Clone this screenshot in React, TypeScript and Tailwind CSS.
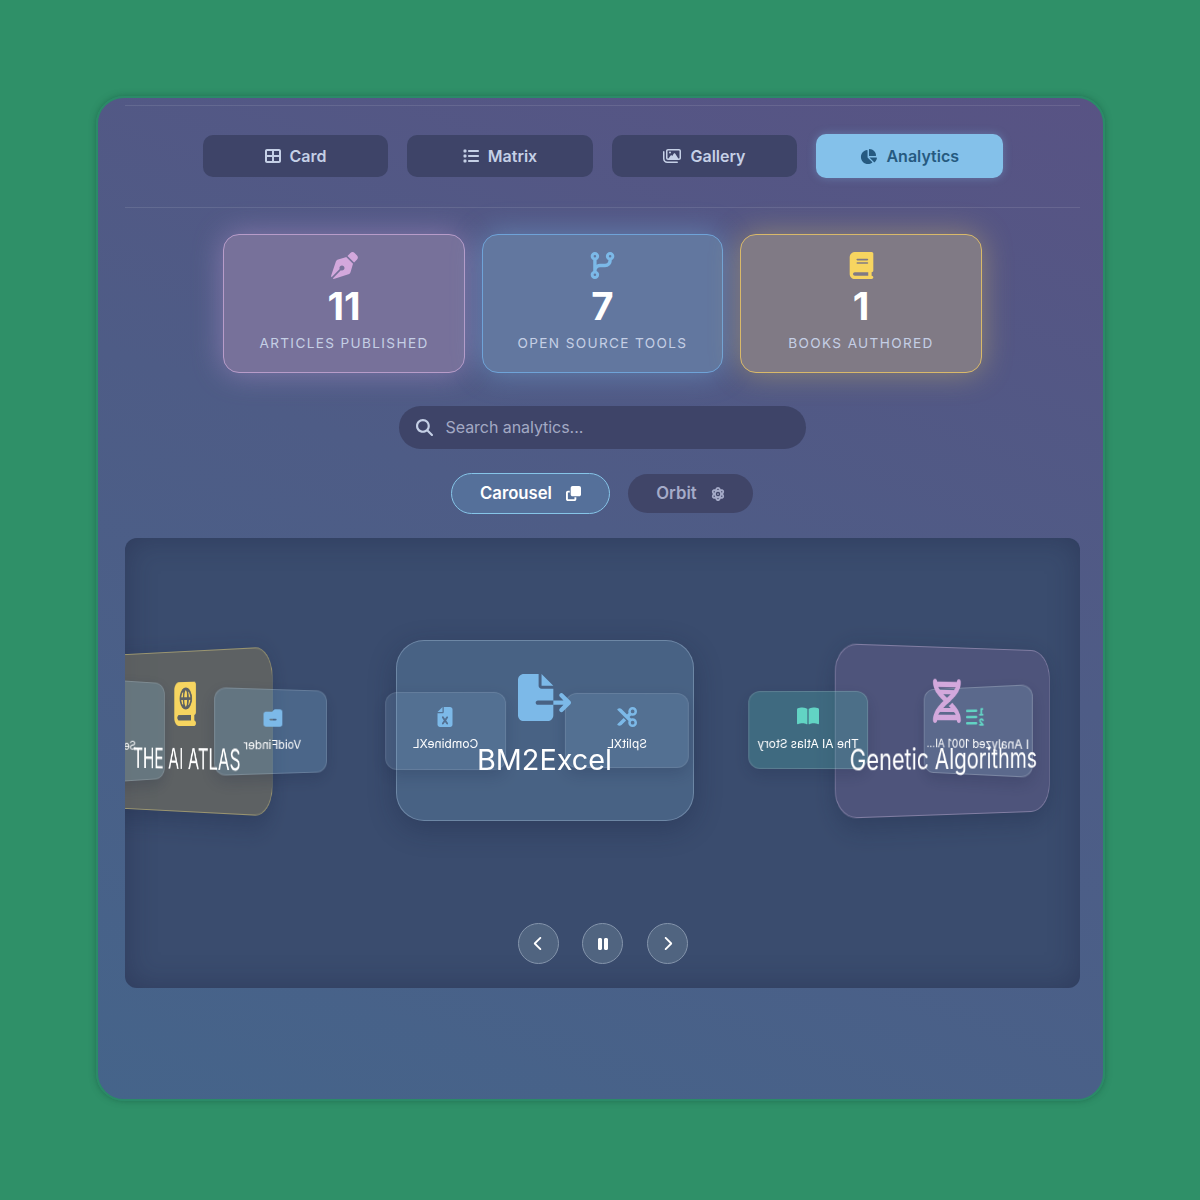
import * as React from "react";
import {
  FaAtom,
  FaBook,
  FaBookAtlas,
  FaBookOpen,
  FaChartPie,
  FaChevronLeft,
  FaChevronRight,
  FaClone,
  FaCodeBranch,
  FaDna,
  FaFileExcel,
  FaFileExport,
  FaFileImage,
  FaFolderMinus,
  FaList,
  FaListOl,
  FaMagnifyingGlass,
  FaPause,
  FaPenNib,
  FaRegImages,
  FaScissors,
  FaTableCellsLarge,
} from "react-icons/fa6";

const FONT = "font-['Inter','Liberation_Sans',sans-serif]";

// the three large cards: their glass sits under the small cards, their content over them
const ATLAS_BOX = "left-[-88px] top-[113px] h-[161px] w-[296px] [transform:perspective(2300px)_rotateY(-56deg)]";
const EXCEL_BOX = "left-[271px] top-[102px] h-[181px] w-[298px]";
const GENETIC_BOX = "left-[673px] top-[109px] h-[168px] w-[298px] [transform:perspective(2300px)_rotateY(44deg)]";

function Tab({ icon, label, active }: { icon: React.ReactNode; label: string; active?: boolean }) {
  return (
    <button
      type="button"
      className={
        active
          ? "flex h-[44px] w-[187px] items-center justify-center gap-[9px] rounded-[10px] bg-[#84c1ea] text-[16px] font-semibold text-[#265a80] shadow-[0_0_8px_rgba(132,193,234,0.35)]"
          : "flex h-[42px] w-[185.5px] items-center justify-center gap-[9px] rounded-[10px] bg-[#3e4468] text-[16px] font-semibold text-[#c5d0e6]"
      }
    >
      {icon}
      <span>{label}</span>
    </button>
  );
}

function Stat({ icon, value, label, className }: { icon: React.ReactNode; value: string; label: string; className: string }) {
  return (
    <div className={"flex h-[139px] w-[241.5px] flex-col items-center rounded-[16px] border pt-[17px] " + className}>
      {icon}
      <div className="mt-[4px] text-[38.4px] font-bold leading-[46px] text-white">{value}</div>
      <div className="mt-[4px] text-[13.6px] uppercase leading-[20px] tracking-[1.36px] text-[#c5cfe5]">{label}</div>
    </div>
  );
}

function BackCard({ icon, label, className }: { icon: React.ReactNode; label: string; className: string }) {
  return (
    <div className={"absolute flex flex-col items-center justify-center gap-[9px] rounded-[12px] border pb-[3px] shadow-[0_6px_16px_rgba(20,30,60,0.2)] " + className}>
      {icon}
      <div className="whitespace-nowrap text-[12px] leading-[16px] text-white">{label}</div>
    </div>
  );
}

function FrontGlass({ className }: { className: string }) {
  return <div className={"absolute rounded-[28px] border shadow-[0_8px_28px_rgba(20,30,60,0.3)] " + className} />;
}

function FrontContent({ icon, label, className, labelClass }: { icon: React.ReactNode; label: string; className: string; labelClass: string }) {
  return (
    <div className={"absolute flex flex-col items-center " + className}>
      {icon}
      <div className={"whitespace-nowrap text-[28.8px] leading-[36px] text-white " + labelClass}>{label}</div>
    </div>
  );
}

function RoundButton({ children }: { children: React.ReactNode }) {
  return (
    <button type="button" className="flex h-[41px] w-[41px] items-center justify-center rounded-full border border-[#8494ab] bg-[#506480] text-white">
      {children}
    </button>
  );
}

export default function App() {
  return (
    <div className={"flex h-[1200px] items-start justify-center bg-[#2f9068] pt-[96px] " + FONT}>
      <div className="h-[1005px] w-[1009px] rounded-[28px] border-[2px] border-[#2b8a68] bg-[linear-gradient(20deg,#45648a_0%,#4e5c86_55%,#585384_100%)] pl-[27px] pr-[23px] pt-[7px] shadow-[0_0_6px_rgba(20,80,60,0.5)]">
        <div className="h-px bg-white/10" />

        <div className="mt-[28px] flex h-[44px] items-center justify-center gap-[19px] pl-[2px]">
          <Tab icon={<FaTableCellsLarge size={16} />} label="Card" />
          <Tab icon={<FaList size={16} />} label="Matrix" />
          <Tab icon={<FaRegImages size={18} />} label="Gallery" />
          <Tab active icon={<FaChartPie size={17} />} label="Analytics" />
        </div>

        <div className="mt-[29px] h-px bg-white/10" />

        <div className="mt-[26px] flex justify-center gap-[17px] pl-[1px]">
          <Stat
            className="border-[#b79cc9] bg-[#77719a] shadow-[0_0_30px_rgba(200,160,220,0.45)]"
            icon={<FaPenNib size={27} className="text-[#d3a8dc]" />}
            value="11"
            label="Articles Published"
          />
          <Stat
            className="border-[#6fa3d8] bg-[#62779f] shadow-[0_0_30px_rgba(124,185,232,0.45)]"
            icon={<FaCodeBranch size={27} className="text-[#7cb9e8]" />}
            value="7"
            label="Open Source Tools"
          />
          <Stat
            className="border-[#d9b96a] bg-[#807a85] shadow-[0_0_30px_rgba(245,208,96,0.38)]"
            icon={<FaBook size={27} className="text-[#f7d560]" />}
            value="1"
            label="Books Authored"
          />
        </div>

        <div className="mx-auto mt-[33px] flex h-[43px] w-[407px] items-center gap-[13px] rounded-full bg-[#3e4468] pl-[17px]">
          <FaMagnifyingGlass size={17} className="text-[#c5d0e6]" />
          <span className="pb-[2px] text-[16px] tracking-[-0.05px] text-[#a3a9c4]">Search analytics...</span>
        </div>

        <div className="mt-[24px] flex h-[41px] items-center justify-center gap-[18px]">
          <button type="button" className="flex h-[41px] w-[159px] items-center justify-center gap-[14px] rounded-full border border-[#86c5e8] bg-[#55709a] text-[16.7px] font-semibold text-white">
            Carousel
            <FaClone size={15} />
          </button>
          <button type="button" className="flex h-[39px] w-[125px] items-center justify-center gap-[14px] rounded-full bg-[#404568] text-[16.7px] font-semibold text-[#a5abc8]">
            Orbit
            <FaAtom size={14} />
          </button>
        </div>

        <div className="relative mt-[24px] flex h-[450px] flex-col justify-end overflow-hidden rounded-[12px] bg-[#3a4c6e] pb-[24px] shadow-[inset_0_0_30px_rgba(25,30,60,0.35)]">
          <FrontGlass className={ATLAS_BOX + " border-[#c5b878]/60 bg-[#6e6c5c]/65"} />
          <FrontGlass className={EXCEL_BOX + " border-[#a5bdd6]/40 bg-[#6a96bb]/30"} />
          <FrontGlass className={GENETIC_BOX + " border-[#b5a8cc]/50 bg-[#6b5f8e]/40"} />

          {/* back of the ring, seen mirrored */}
          <BackCard
            className="left-[-69px] top-[142px] h-[102px] w-[120px] border-white/15 bg-[#7fa8c0]/30 [transform:perspective(450px)_rotateY(210deg)]"
            icon={<FaFileImage size={24} className="text-[#7cb9e8]" />}
            label="Security"
          />
          <BackCard
            className="left-[88px] top-[151px] h-[85px] w-[120px] border-white/15 bg-[#6fa3c8]/30 [transform:perspective(480px)_rotateY(200deg)]"
            icon={<FaFolderMinus size={20} className="text-[#7cb9e8]" />}
            label="VoidFinder"
          />
          <BackCard
            className="left-[260px] top-[154px] h-[78px] w-[121px] border-white/10 bg-[#7fa6c8]/20 [transform:perspective(1000px)_rotateY(178deg)]"
            icon={<FaFileExcel size={20} className="text-[#7cb9e8]" />}
            label="CombineXL"
          />
          <BackCard
            className="left-[440px] top-[155px] h-[75px] w-[124px] border-white/10 bg-[#7fa6c8]/20 [transform:perspective(1000px)_rotateY(182deg)]"
            icon={<FaScissors size={20} className="text-[#7cb9e8]" />}
            label="SplitXL"
          />
          <BackCard
            className="left-[623px] top-[153px] h-[78px] w-[120px] border-white/15 bg-[#48a0a0]/35 [transform:perspective(1000px)_rotateY(177deg)]"
            icon={<FaBookOpen size={22} className="text-[#62d4c4]" />}
            label="The AI Atlas Story"
          />
          <BackCard
            className="left-[790px] top-[149px] h-[88px] w-[120px] border-white/20 bg-[#7fa8c0]/25 [transform:perspective(420px)_rotateY(155deg)]"
            icon={<FaListOl size={20} className="text-[#62d4c4]" />}
            label="I Analyzed 1001 AI..."
          />

          {/* front of the ring */}
          <FrontContent
            className={ATLAS_BOX + " pt-[31px]"}
            icon={<FaBookAtlas size={44} className="text-[#f7d560]" />}
            label="THE AI ATLAS"
            labelClass="mt-[15px]"
          />
          <FrontContent
            className={EXCEL_BOX + " pt-[31px]"}
            icon={<FaFileExport size={53} className="text-[#7cb9e8]" />}
            label="BM2Excel"
            labelClass="mt-[18px]"
          />
          <FrontContent
            className={GENETIC_BOX + " pt-[32px]"}
            icon={<FaDna size={44} className="text-[#d3a8dc]" />}
            label="Genetic Algorithms"
            labelClass="mt-[18px]"
          />

          <div className="relative flex justify-center gap-[23.5px] pl-px">
            <RoundButton><FaChevronLeft size={15} /></RoundButton>
            <RoundButton><FaPause size={16} /></RoundButton>
            <RoundButton><FaChevronRight size={15} /></RoundButton>
          </div>
        </div>
      </div>
    </div>
  );
}
